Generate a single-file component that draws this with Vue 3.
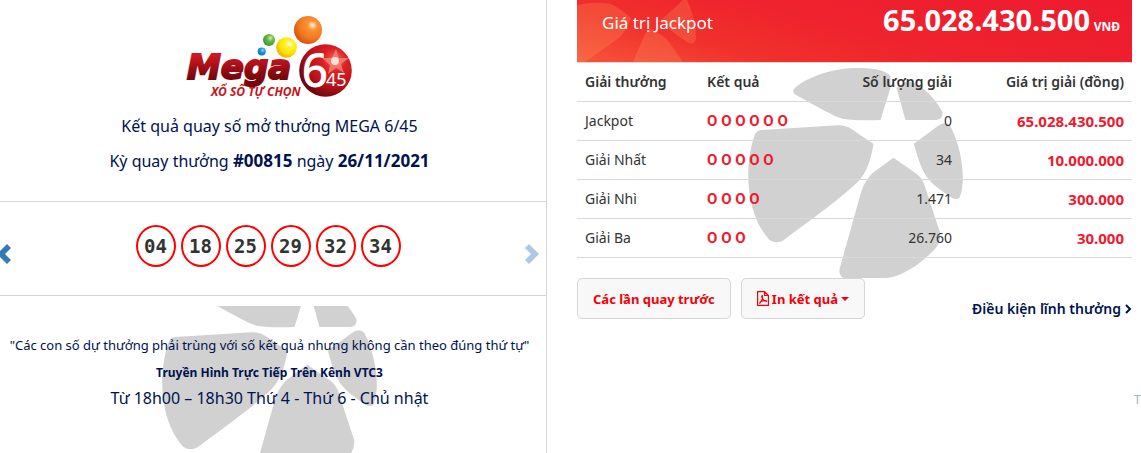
<script setup>
import { ref } from 'vue';

const draw = ref({
  id: '#00815',
  date: '26/11/2021',
  numbers: ['04', '18', '25', '29', '32', '34'],
  jackpot: '65.028.430.500'
});

const prizes = ref([
  { name: 'Jackpot', match: 6, count: '0', value: '65.028.430.500' },
  { name: 'Giải Nhất', match: 5, count: '34', value: '10.000.000' },
  { name: 'Giải Nhì', match: 4, count: '1.471', value: '300.000' },
  { name: 'Giải Ba', match: 3, count: '26.760', value: '30.000' }
]);

function circles(n) {
  return Array(n).fill('O').join(' ');
}
</script>

<template>
  <main class="page">
    <!-- petals around the star, shared by both watermarks -->
    <svg class="defs" width="0" height="0" aria-hidden="true">
      <symbol id="petals" viewBox="22 25 644 630">
        <path d="M158 90C174 68 250 28 338 25C405 24 430 32 449 48L449 84L419 181C380 182 340 183 305 177C275 168 210 130 164 105Q154 98 158 90Z" />
        <path d="M467 84L500 64C550 76 588 125 605 158Q607 178 588 181L494 181Z" />
        <path d="M60 211L290 197Q313 196 332 208L398 253C388 310 376 340 350 368C290 425 190 495 128 542Q105 554 85 540C45 495 22 430 22 340C23 290 34 245 42 225Q48 213 60 211Z" />
        <path d="M519 252L590 200Q612 182 628 198C655 250 667 310 666 362Q664 400 655 415Q644 422 630 413C600 392 575 375 558 352C540 325 528 285 519 252Z" />
        <path d="M458 294L528 343Q545 356 552 380L598 520Q600 545 585 565C545 610 485 650 440 655L308 655Q292 648 297 625L360 400Q370 365 395 340Z" />
      </symbol>
    </svg>

    <section class="result">
      <div class="intro">
        <svg class="logo" viewBox="0 0 166 84" role="img" aria-label="Mega 6/45">
          <defs>
            <linearGradient id="word" x1="0" y1="0" x2="0" y2="1">
              <stop offset="0.2" stop-color="#cf1820" />
              <stop offset="0.8" stop-color="#75060b" />
            </linearGradient>
            <radialGradient id="red" cx="0.68" cy="0.3" r="0.75">
              <stop offset="0" stop-color="#f26b5c" />
              <stop offset="0.3" stop-color="#dd1f26" />
              <stop offset="0.65" stop-color="#bd131a" />
              <stop offset="1" stop-color="#6a0609" />
            </radialGradient>
            <radialGradient id="orange" cx="0.66" cy="0.33" r="0.7">
              <stop offset="0" stop-color="#fff0dc" />
              <stop offset="0.25" stop-color="#f89135" />
              <stop offset="0.65" stop-color="#f47b20" />
              <stop offset="1" stop-color="#d9540f" />
            </radialGradient>
            <radialGradient id="yellow" cx="0.64" cy="0.34" r="0.7">
              <stop offset="0" stop-color="#fffef0" />
              <stop offset="0.28" stop-color="#fff12a" />
              <stop offset="0.65" stop-color="#ffe400" />
              <stop offset="1" stop-color="#f0aa00" />
            </radialGradient>
            <radialGradient id="green" cx="0.62" cy="0.34" r="0.7">
              <stop offset="0" stop-color="#d5f0b5" />
              <stop offset="0.4" stop-color="#66b944" />
              <stop offset="1" stop-color="#399531" />
            </radialGradient>
            <radialGradient id="blue" cx="0.62" cy="0.34" r="0.7">
              <stop offset="0" stop-color="#9adcf8" />
              <stop offset="0.4" stop-color="#1c9ae0" />
              <stop offset="1" stop-color="#0871bd" />
            </radialGradient>
          </defs>
          <circle cx="121" cy="15" r="14" fill="url(#orange)" />
          <circle cx="99.500" cy="32.500" r="10.300" fill="url(#yellow)" />
          <circle cx="82" cy="25" r="6" fill="url(#green)" />
          <circle cx="74.700" cy="36.500" r="4" fill="url(#blue)" />
          <text class="logo-word" x="0" y="64" fill="url(#word)" stroke="url(#word)">Mega</text>
          <circle cx="138.500" cy="55.500" r="27.500" fill="#fff" />
          <circle cx="138.500" cy="55.500" r="26.300" fill="url(#red)" />
          <path d="M149 34L152 43L162 43L154 49L157 58L149 53L141 59L143 50L135 43L145 43Z" fill="#f58b7b" opacity="0.75" />
          <circle cx="148" cy="46" r="4" fill="#fff" opacity="0.75" />
          <text class="logo-six" x="115" y="72">6</text>
          <text class="logo-small" x="139" y="71">45</text>
          <text class="logo-sub" x="24" y="81">XỔ SỐ TỰ CHỌN</text>
        </svg>
        <p class="intro-line">Kết quả quay số mở thưởng MEGA 6/45</p>
        <p class="intro-line">Kỳ quay thưởng <b>{{ draw.id }}</b> ngày <b>{{ draw.date }}</b></p>
      </div>

      <div class="numbers">
        <button class="arrow prev" type="button" aria-label="Kỳ trước">
          <svg viewBox="0 0 14 20"><path d="M10 0L14 4L8 10L14 16L10 20L0 10Z" /></svg>
        </button>
        <div class="balls">
          <span v-for="n in draw.numbers" :key="n" class="ball">{{ n }}</span>
        </div>
        <button class="arrow next" type="button" aria-label="Kỳ sau" disabled>
          <svg viewBox="0 0 14 20"><path d="M4 0L0 4L6 10L0 16L4 20L14 10Z" /></svg>
        </button>
      </div>

      <div class="schedule">
        <div class="schedule-mark" aria-hidden="true">
          <svg class="petals"><use href="#petals" /></svg>
        </div>
        <p class="note">"Các con số dự thưởng phải trùng với số kết quả nhưng không cần theo đúng thứ tự"</p>
        <p class="channel">Truyền Hình Trực Tiếp Trên Kênh VTC3</p>
        <p class="time">Từ 18h00 – 18h30 Thứ 4 - Thứ 6 - Chủ nhật</p>
      </div>
    </section>

    <section class="detail">
      <div class="banner">
        <svg class="banner-mark" viewBox="0 0 125 62" aria-hidden="true">
          <path d="M0 5Q20 1 34 4Q44 9 54 18Q50 30 42 38L8 62L0 62Z" />
          <path d="M82 22L93 12L106 0L110 0Q119 18 119 39Q117 46 110 42Q94 32 88 24Z" />
          <path d="M74 29Q88 36 92 42L106 62L56 62L68 34Q70 30 74 29Z" />
        </svg>
        <span class="banner-label">Giá trị Jackpot</span>
        <span class="banner-value"><b>{{ draw.jackpot }}</b> <small>VNĐ</small></span>
      </div>

      <div class="prizes">
        <svg class="petals prizes-mark" aria-hidden="true"><use href="#petals" /></svg>
        <table>
          <thead>
            <tr>
              <th class="col-name">Giải thưởng</th>
              <th class="col-match">Kết quả</th>
              <th class="col-count right">Số lượng giải</th>
              <th class="right">Giá trị giải (đồng)</th>
            </tr>
          </thead>
          <tbody>
            <tr v-for="prize in prizes" :key="prize.name">
              <td>{{ prize.name }}</td>
              <td class="match">{{ circles(prize.match) }}</td>
              <td class="right">{{ prize.count }}</td>
              <td class="right value">{{ prize.value }}</td>
            </tr>
          </tbody>
        </table>
      </div>

      <div class="actions">
        <button class="btn" type="button">Các lần quay trước</button>
        <button class="btn" type="button">
          <svg class="pdf" viewBox="0 0 12 15">
            <path d="M0.600 0.600H7.500L11.400 4.500V14.400H0.600ZM7.500 0.600V4.500H11.400" />
            <path d="M2.300 12.500C4 11.500 6 7.500 5.500 5C5.300 4 4.500 4.700 4.900 6C5.500 8.500 7.500 10.200 9.600 10.300C10.300 9.500 6 9 2.900 11.300" />
          </svg>
          In kết quả
          <i class="caret"></i>
        </button>
        <a class="terms" href="#">
          Điều kiện lĩnh thưởng
          <svg class="terms-arrow" viewBox="0 0 7 10"><path d="M1 1L5 5L1 9" /></svg>
        </a>
      </div>
    </section>

    <a class="side-tab" href="#">T</a>
  </main>
</template>

<style>
body {
  margin: 0;
  background: #fff;
}
</style>

<style scoped>
.page {
  position: relative;
  display: grid;
  grid-template-columns: minmax(0, 547fr) minmax(0, 594fr);
  min-height: 100vh;
  overflow: hidden;
  font-family: "Noto Sans", "Open Sans", sans-serif;
  font-size: 14px;
  color: #333;
}

.defs {
  position: absolute;
}

p {
  margin: 0;
}

.petals {
  display: block;
  width: 215px;
  height: 210px;
  fill: #d1d1d1;
}

/* left column */
.result {
  display: flex;
  flex-direction: column;
  border-right: 1px solid #d6d6d6;
  text-align: center;
  color: #00124f;
}

.intro {
  padding: 15px 7px 22px 0;
  border-bottom: 1px solid #d6d6d6;
}

.logo {
  display: block;
  width: 166px;
  height: 84px;
  margin: 0 auto 10px;
  overflow: visible;
}

.logo-word {
  font: italic bold 34px "DejaVu Sans", sans-serif;
  stroke-width: 2px;
}

.logo-six {
  font: 45px "Noto Sans", sans-serif;
  fill: #fff;
  stroke: #fff;
  stroke-width: 1px;
}

.logo-small {
  font: 18px "Noto Sans", sans-serif;
  fill: #fff;
}

.logo-sub {
  font: italic bold 12px "Noto Sans", sans-serif;
  fill: #c4161c;
}

.intro-line {
  font-size: 16px;
  line-height: 35px;
}

.intro-line b {
  font-size: 17px;
  line-height: 1;
}

.numbers {
  display: flex;
  align-items: center;
  justify-content: space-between;
  height: 94px;
  box-sizing: border-box;
  padding: 0 7px 5px 0;
  border-bottom: 1px solid #d6d6d6;
}

.arrow {
  width: 14px;
  height: 20px;
  margin-top: 15px;
  padding: 0;
  border: 0;
  background: none;
  cursor: pointer;
}

.arrow svg {
  display: block;
  width: 14px;
  height: 20px;
  fill: #337ab7;
}

.prev {
  margin-left: -3px;
}

.next {
  opacity: 0.4;
}

.balls {
  display: flex;
  gap: 5px;
}

.ball {
  width: 40px;
  height: 42px;
  box-sizing: border-box;
  border: 2px solid #f00;
  border-radius: 50%;
  font: bold 19px/38px "DejaVu Sans Mono", monospace;
  color: #333;
}

.schedule {
  position: relative;
  flex: 1;
  padding: 36px 7px 42px 0;
}

.schedule-mark {
  position: absolute;
  inset: 10px 7px 0 0;
  display: flex;
  justify-content: center;
  overflow: hidden;
}

.schedule-mark .petals {
  flex: none;
  margin-top: -31px;
}

.schedule p {
  position: relative;
}

.note {
  font-size: 13px;
  line-height: 27px;
}

.channel {
  font-size: 12px;
  font-weight: bold;
  line-height: 27px;
}

.time {
  font-size: 16px;
  line-height: 24px;
}

/* right column */
.detail {
  padding: 0 9px 0 30px;
}

.banner {
  position: relative;
  display: flex;
  justify-content: space-between;
  height: 62px;
  box-sizing: border-box;
  padding: 0 12px 0 25px;
  background: linear-gradient(15deg, #f8553a 0%, #f0312c 25%, #ef232d 50%, #ee1a2f 100%);
  color: #fff;
}

.banner-mark {
  position: absolute;
  left: 0;
  top: 0;
  width: 125px;
  height: 62px;
  fill: #ff9c62;
  opacity: 0.25;
}

.banner-label {
  position: relative;
  font-size: 17px;
  line-height: 46px;
}

.banner-value {
  line-height: 40px;
}

.banner-value b {
  font-size: 29px;
}

.banner-value small {
  font-size: 12px;
  font-weight: bold;
}

.prizes {
  position: relative;
  padding-bottom: 20px;
}

.prizes-mark {
  position: absolute;
  left: 50%;
  bottom: 0;
  margin-left: -107px;
}

table {
  position: relative;
  width: 100%;
  table-layout: fixed;
  border-collapse: collapse;
  border-top: 1px solid #d9d9d9;
}

th,
td {
  padding: 8px;
  border-bottom: 1px solid #d9d9d9;
  text-align: left;
  line-height: 22px;
}

th {
  font-weight: 600;
}

.col-name {
  width: 22%;
  box-sizing: border-box;
}

.col-match {
  width: 23%;
  box-sizing: border-box;
}

.col-count {
  width: 24%;
  box-sizing: border-box;
}

.right {
  text-align: right;
}

.match {
  font-family: Roboto, sans-serif;
  font-size: 15px;
  font-weight: bold;
  color: #ee1a2e;
}

.value {
  font-size: 15px;
  font-weight: bold;
  color: #ee1a2e;
}

.actions {
  display: flex;
  align-items: center;
  gap: 10px;
}

.btn {
  display: flex;
  align-items: center;
  gap: 3px;
  height: 41px;
  padding: 0 15px;
  border: 1px solid #d6d6d6;
  border-radius: 5px;
  background: #f8f8f8;
  font-family: inherit;
  font-size: 13px;
  font-weight: bold;
  color: #f40009;
  white-space: nowrap;
  cursor: pointer;
}

.pdf {
  width: 12px;
  height: 15px;
  fill: none;
  stroke: #f40009;
  stroke-width: 1.2px;
}

.caret {
  border: 4px solid transparent;
  border-top-color: #f40009;
  border-bottom: 0;
}

.terms {
  display: flex;
  align-items: center;
  gap: 4px;
  margin: 20px 0 0 auto;
  font-weight: 600;
  color: #00124f;
  text-decoration: none;
  white-space: nowrap;
}

.terms-arrow {
  width: 7px;
  height: 10px;
  fill: none;
  stroke: #00124f;
  stroke-width: 2px;
}

.side-tab {
  position: absolute;
  top: 390px;
  right: 0;
  font-size: 13px;
  color: #a3b4c4;
  text-decoration: none;
}
</style>
